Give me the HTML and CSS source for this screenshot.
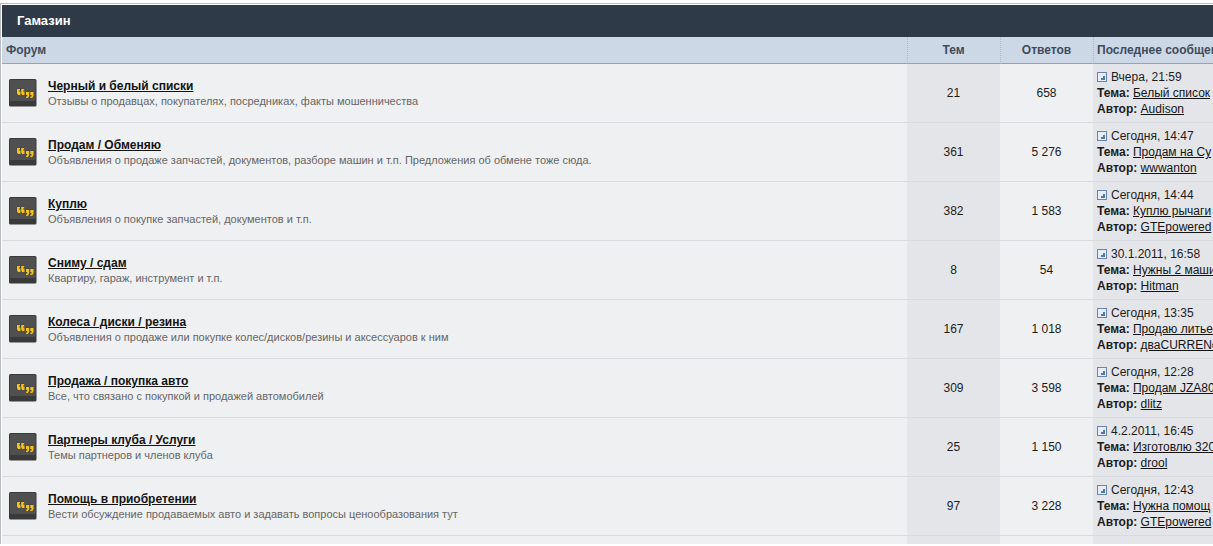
FILE: index.html
```
<!DOCTYPE html>
<html lang="ru">
<head>
<meta charset="utf-8">
<title>Гамазин</title>
<link rel="stylesheet" href="styles.css">
</head>
<body>
<svg class="defs" aria-hidden="true">
<symbol id="forum" viewBox="0 0 28 28">
<rect width="27.5" height="27.5" rx="1.5" fill="#3a3a3b"/>
<rect x="1" y="1" width="25.5" height="21" rx="1" fill="#505051"/>
<path d="M7.5 9.5h8V16h-8zM16.500 12.500h8V19h-8z" fill="#45423a"/>
<path d="M8 10h3v1.500h-1v1h1.500V16H9l-1-1.500zM12.200 10h3v1.500h-1v1h1.300V16h-2.300l-1-1.500zM17 13h3.200v4L19 19h-2v-1.500h1.200V16H17zM21.300 13h3.200v4l-1.200 2h-2v-1.500h1.200V16h-1.200z" fill="#f5c320"/>
</symbol>
<symbol id="last" viewBox="0 0 10 10">
<rect x=".5" y=".5" width="9" height="9" fill="#e6edf7" stroke="#6884b0"/>
<path d="M6 4h2v4H4V6h2z" fill="#5476ab"/>
</symbol>
</svg>
<main class="board">
<h1 class="board-title">Гамазин</h1>
<table class="forums">
<colgroup><col><col class="col-count"><col class="col-count"><col class="col-last"></colgroup>
<thead>
<tr><th class="left">Форум</th><th>Тем</th><th>Ответов</th><th class="left">Последнее сообщение</th></tr>
</thead>
<tbody>
<tr><td><div class="forum"><svg class="forum-icon"><use href="#forum"/></svg><div><a class="name" href="#">Черный и белый списки</a><p class="desc">Отзывы о продавцах, покупателях, посредниках, факты мошенничества</p></div></div></td><td class="count shade">21</td><td class="count">658</td><td class="last shade"><svg class="last-icon"><use href="#last"/></svg>Вчера, 21:59<br><b>Тема:</b> <a href="#">Белый список</a><br><b>Автор:</b> <a href="#">Audison</a></td></tr>
<tr><td><div class="forum"><svg class="forum-icon"><use href="#forum"/></svg><div><a class="name" href="#">Продам / Обменяю</a><p class="desc">Объявления о продаже запчастей, документов, разборе машин и т.п. Предложения об обмене тоже сюда.</p></div></div></td><td class="count shade">361</td><td class="count">5 276</td><td class="last shade"><svg class="last-icon"><use href="#last"/></svg>Сегодня, 14:47<br><b>Тема:</b> <a href="#">Продам на Су</a><br><b>Автор:</b> <a href="#">wwwanton</a></td></tr>
<tr><td><div class="forum"><svg class="forum-icon"><use href="#forum"/></svg><div><a class="name" href="#">Куплю</a><p class="desc">Объявления о покупке запчастей, документов и т.п.</p></div></div></td><td class="count shade">382</td><td class="count">1 583</td><td class="last shade"><svg class="last-icon"><use href="#last"/></svg>Сегодня, 14:44<br><b>Тема:</b> <a href="#">Куплю рычаги</a><br><b>Автор:</b> <a href="#">GTEpowered</a></td></tr>
<tr><td><div class="forum"><svg class="forum-icon"><use href="#forum"/></svg><div><a class="name" href="#">Сниму / сдам</a><p class="desc">Квартиру, гараж, инструмент и т.п.</p></div></div></td><td class="count shade">8</td><td class="count">54</td><td class="last shade"><svg class="last-icon"><use href="#last"/></svg>30.1.2011, 16:58<br><b>Тема:</b> <a href="#">Нужны 2 маши</a><br><b>Автор:</b> <a href="#">Hitman</a></td></tr>
<tr><td><div class="forum"><svg class="forum-icon"><use href="#forum"/></svg><div><a class="name" href="#">Колеса / диски / резина</a><p class="desc">Объявления о продаже или покупке колес/дисков/резины и аксессуаров к ним</p></div></div></td><td class="count shade">167</td><td class="count">1 018</td><td class="last shade"><svg class="last-icon"><use href="#last"/></svg>Сегодня, 13:35<br><b>Тема:</b> <a href="#">Продаю литье</a><br><b>Автор:</b> <a href="#">дваCURRENо</a></td></tr>
<tr><td><div class="forum"><svg class="forum-icon"><use href="#forum"/></svg><div><a class="name" href="#">Продажа / покупка авто</a><p class="desc">Все, что связано с покупкой и продажей автомобилей</p></div></div></td><td class="count shade">309</td><td class="count">3 598</td><td class="last shade"><svg class="last-icon"><use href="#last"/></svg>Сегодня, 12:28<br><b>Тема:</b> <a href="#">Продам JZA80</a><br><b>Автор:</b> <a href="#">dlitz</a></td></tr>
<tr><td><div class="forum"><svg class="forum-icon"><use href="#forum"/></svg><div><a class="name" href="#">Партнеры клуба / Услуги</a><p class="desc">Темы партнеров и членов клуба</p></div></div></td><td class="count shade">25</td><td class="count">1 150</td><td class="last shade"><svg class="last-icon"><use href="#last"/></svg>4.2.2011, 16:45<br><b>Тема:</b> <a href="#">Изготовлю 320</a><br><b>Автор:</b> <a href="#">drool</a></td></tr>
<tr><td><div class="forum"><svg class="forum-icon"><use href="#forum"/></svg><div><a class="name" href="#">Помощь в приобретении</a><p class="desc">Вести обсуждение продаваемых авто и задавать вопросы ценообразования тут</p></div></div></td><td class="count shade">97</td><td class="count">3 228</td><td class="last shade"><svg class="last-icon"><use href="#last"/></svg>Сегодня, 12:43<br><b>Тема:</b> <a href="#">Нужна помощ</a><br><b>Автор:</b> <a href="#">GTEpowered</a></td></tr>
</tbody>
<tfoot><tr><td></td><td class="shade"></td><td></td><td class="shade"></td></tr></tfoot>
</table>
</main>
</body>
</html>
```
FILE: styles.css
```
body {
  margin: 0;
  padding-top: 3px;
  background: #fff;
  color: #1c1c1c;
  font: 12px/16px "Liberation Sans", Arial, sans-serif;
}
.defs {
  display: none;
}
.board {
  border: 1px solid #b8bcc2;
  border-width: 1px 0 0 1px;
  padding: 1px 0 0 1px;
}
.board-title {
  margin: 0;
  padding: 8px 15px;
  background: #2f3a49;
  color: #fff;
  font-size: 13px;
  line-height: 16px;
}
.forums {
  width: 100%;
  table-layout: fixed;
  border-collapse: separate;
  border-spacing: 0;
}
.col-count {
  width: 93px;
}
.col-last {
  width: 120px;
}
th {
  padding: 5px 4px;
  background: #cdd8e7;
  border-bottom: 1px solid #91a3bd;
  color: #3f4b5b;
  white-space: nowrap;
  overflow: hidden;
}
th + th {
  border-left: 1px dotted #a9b8cc;
  padding-left: 3px;
}
.left {
  text-align: left;
}
td {
  padding: 5px 4px;
  background: #eff0f2;
  border-bottom: 1px solid #d8dadd;
  white-space: nowrap;
  overflow: hidden;
}
.shade {
  background: #e4e5e9;
}
.forum {
  display: flex;
  align-items: center;
  gap: 11px;
  padding-left: 3px;
}
.forum-icon {
  width: 28px;
  height: 28px;
  flex: none;
}
.name {
  display: block;
  width: max-content;
  padding-top: 1px;
  font-weight: bold;
}
a {
  color: #141414;
}
.desc {
  margin: 0;
  color: #666;
  font-size: 11px;
  line-height: 15px;
}
.count {
  text-align: center;
}
.last-icon {
  width: 10px;
  height: 10px;
  margin-right: 4px;
  vertical-align: -1px;
}
tfoot td {
  height: 8px;
  padding: 0;
  border: 0;
}
```
